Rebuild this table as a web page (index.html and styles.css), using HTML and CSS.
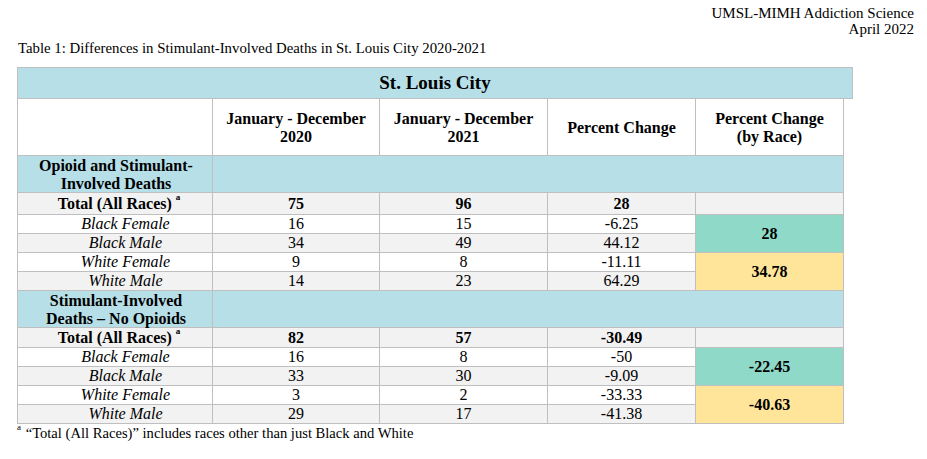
FILE: index.html
```html
<!DOCTYPE html>
<html>
<head>
<meta charset="utf-8">
<link rel="stylesheet" href="styles.css">
</head>
<body>
<div class="page">
  <div class="org">UMSL-MIMH Addiction Science<br>April 2022</div>
  <div class="caption">Table 1: Differences in Stimulant-Involved Deaths in St. Louis City 2020-2021</div>
  <div class="title">St. Louis City</div>
  <table class="data">
    <colgroup>
      <col class="c1"><col class="c2"><col class="c3"><col class="c4"><col class="c5">
    </colgroup>
    <tr class="head">
      <th></th>
      <th>January - December<br>2020</th>
      <th>January - December<br>2021</th>
      <th>Percent Change</th>
      <th>Percent Change<br>(by Race)</th>
    </tr>
    <tr class="section">
      <th>Opioid and Stimulant-<br>Involved Deaths</th>
      <td colspan="4"></td>
    </tr>
    <tr class="total grey">
      <th class="lbl">Total (All Races)<sup>a</sup></th>
      <td>75</td><td>96</td><td>28</td><td></td>
    </tr>
    <tr class="row">
      <td class="lbl">Black Female</td><td>16</td><td>15</td><td>-6.25</td>
      <td rowspan="2" class="teal">28</td>
    </tr>
    <tr class="row grey">
      <td class="lbl">Black Male</td><td>34</td><td>49</td><td>44.12</td>
    </tr>
    <tr class="row">
      <td class="lbl">White Female</td><td>9</td><td>8</td><td>-11.11</td>
      <td rowspan="2" class="yellow">34.78</td>
    </tr>
    <tr class="row grey">
      <td class="lbl">White Male</td><td>14</td><td>23</td><td>64.29</td>
    </tr>
    <tr class="section">
      <th>Stimulant-Involved<br>Deaths – No Opioids</th>
      <td colspan="4"></td>
    </tr>
    <tr class="total total2 grey">
      <th class="lbl">Total (All Races)<sup>a</sup></th>
      <td>82</td><td>57</td><td>-30.49</td><td></td>
    </tr>
    <tr class="row">
      <td class="lbl">Black Female</td><td>16</td><td>8</td><td>-50</td>
      <td rowspan="2" class="teal">-22.45</td>
    </tr>
    <tr class="row grey">
      <td class="lbl">Black Male</td><td>33</td><td>30</td><td>-9.09</td>
    </tr>
    <tr class="row">
      <td class="lbl">White Female</td><td>3</td><td>2</td><td>-33.33</td>
      <td rowspan="2" class="yellow">-40.63</td>
    </tr>
    <tr class="row grey">
      <td class="lbl">White Male</td><td>29</td><td>17</td><td>-41.38</td>
    </tr>
  </table>
  <div class="footnote"><sup>a</sup> “Total (All Races)” includes races other than just Black and White</div>
</div>
</body>
</html>
```

FILE: styles.css
```css
html, body {
  margin: 0;
  padding: 0;
  background: #ffffff;
}
body {
  font-family: "Liberation Serif", "Times New Roman", serif;
  color: #000;
}
.page {
  padding: 5px 13px 0 17px;
  display: flex;
  flex-direction: column;
  align-items: stretch;
}
.org {
  text-align: right;
  font-size: 15px;
  line-height: 16px;
}
.caption {
  font-size: 14.8px;
  line-height: 16px;
  margin-top: 3px;
  padding-left: 1px;
}
.title {
  margin-top: 11px;
  box-sizing: border-box;
  width: 836px;
  height: 32px;
  background: #b7dfe8;
  border: 1px solid #bfbfbf;
  font-weight: bold;
  font-size: 19px;
  line-height: 30px;
  text-align: center;
}
.data {
  margin-top: -1px;
  border-collapse: collapse;
  table-layout: fixed;
  width: 827px;
  font-size: 16px;
}
.c1 { width: 195px; }
.c2 { width: 167px; }
.c3 { width: 168px; }
.c4 { width: 148px; }
.c5 { width: 148px; }
.data th, .data td {
  border: 1px solid #bfbfbf;
  padding: 0;
  text-align: center;
  vertical-align: middle;
}
.data th { font-weight: bold; }
.head th {
  height: 54px;
  padding-top: 2px;
  line-height: 18px;
  font-size: 16px;
  background: #fff;
}
.section th, .section td {
  background: #b7dfe8;
  height: 35px;
  padding-top: 1px;
  line-height: 17.5px;
  font-size: 16px;
}
.section th { padding-left: 2px; }
.total td, .total th {
  height: 20px;
  line-height: 20px;
  font-weight: bold;
  padding-top: 1px;
}
.total2 td, .total2 th {
  height: 19px;
  line-height: 19px;
  padding-top: 0;
}
.total th.lbl { padding-left: 8px; }
.row td {
  height: 18px;
  line-height: 18px;
}
.row td.lbl {
  font-style: italic;
  padding-left: 21px;
}
.grey td, .grey th { background: #f2f2f2; }
.data td.teal {
  background: #8fd9c8;
  font-weight: bold;
}
.data td.yellow {
  background: #ffe599;
  font-weight: bold;
}
sup {
  font-size: 9px;
  line-height: 0;
  vertical-align: top;
  position: relative;
  top: 3px;
  margin-left: 4px;
}
.footnote {
  font-size: 14.6px;
  line-height: 16px;
  margin-top: 1px;
}
.footnote sup { margin-left: 0; margin-right: 1px; top: 2px; }
```
